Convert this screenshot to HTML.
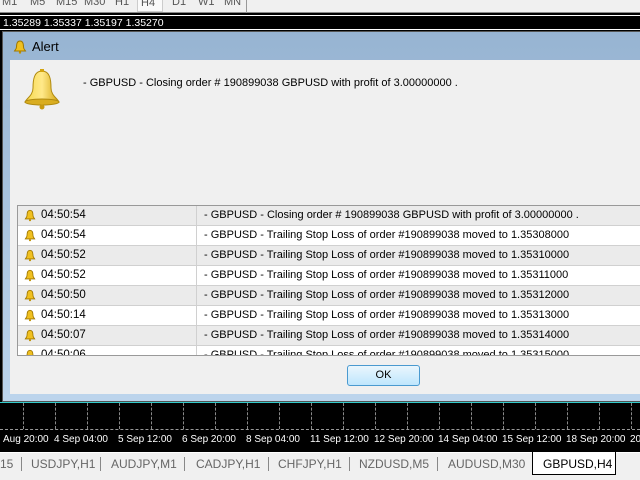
<!DOCTYPE html>
<html><head><style>
*{margin:0;padding:0;box-sizing:border-box}
body{width:640px;height:480px;overflow:hidden;background:#000;font-family:"Liberation Sans",sans-serif;font-size:11px;position:relative}
.abs{position:absolute}
.tb{left:0;top:0;width:640px;height:13px;background:#f0f0f0;border-bottom:1px solid #888}
.tb span{position:absolute;top:-4px;color:#555;font-size:11px}
.dlg{left:2px;top:31px;width:640px;height:371px;background:linear-gradient(#97b4d2,#bcd4ec);border:1px solid #555;border-right:none}
.body{left:7px;top:28px;width:640px;height:334px;background:#f0f0f0}
.list{left:7px;top:145px;width:630px;height:151px;border:1px solid #999;background:#fff;overflow:hidden}
.row{height:20px;border-bottom:1px solid #d0d0d0;position:relative;font-size:11px;line-height:19px}
.row:nth-child(odd){background:#ebebeb}
.row .t{position:absolute;left:23px;font-size:11.5px}
.row .m{position:absolute;left:186px}
.row .d{position:absolute;left:178px;top:0;width:1px;height:20px;background:#d0d0d0}
.bell{position:absolute;left:6px;top:3px}
.ok{left:337px;top:305px;width:73px;height:21px;border:1px solid #4a9ad0;border-radius:3px;background:linear-gradient(#eaf6fd,#bee6fd);text-align:center;line-height:19px;font-size:11px}
.time{left:0;top:434px;color:#fff;font-size:10px;white-space:nowrap}
.tabs{left:0;top:452px;width:640px;height:28px;background:#f0f0f0}
.tabs span{position:absolute;top:5px;color:#666;font-size:12px}
.tabs i{position:absolute;top:5px;width:1px;height:14px;background:#888}
.vd{position:absolute;top:403px;height:26px;border-left:1px dashed #888}
</style></head><body>
<div class="abs tb">
<span style="left:2px">M1</span><span style="left:30px">M5</span><span style="left:56px">M15</span><span style="left:84px">M30</span><span style="left:115px">H1</span>
<span style="left:137px;top:-4px;width:26px;height:16px;background:#fafafa;border:1px solid #ccc;color:#555">&nbsp;H4</span>
<span style="left:172px">D1</span><span style="left:198px">W1</span><span style="left:224px">MN</span>
<div class="abs" style="left:246px;top:0;width:1px;height:13px;background:#999"></div>
</div>
<div class="abs" style="left:0;top:15px;width:640px;height:1px;background:#fff"></div>
<div class="abs" style="left:3px;top:17px;color:#fff;font-size:10.5px">1.35289 1.35337 1.35197 1.35270</div>
<div class="abs" style="left:0;top:29px;width:640px;height:1px;background:#fff"></div>

<div class="abs dlg">
<svg class="abs" style="left:10px;top:8px" width="14" height="14" viewBox="0 0 14 14"><path d="M7 1C4 1 3.5 4 3.5 7C3.5 9 2 10 1.5 11H12.5C12 10 10.5 9 10.5 7C10.5 4 10 1 7 1Z" fill="#f0c020" stroke="#a07800"/><circle cx="7" cy="12.5" r="1.2" fill="#c09000"/></svg>
<div class="abs" style="left:29px;top:7px;font-size:13px;color:#000">Alert</div>
<div class="abs body">
<svg class="abs" style="left:12px;top:8px" width="40" height="42" viewBox="0 0 40 42"><defs><linearGradient id="g" x1="0" x2="1"><stop offset="0" stop-color="#f6d84a"/><stop offset=".5" stop-color="#ffe98a"/><stop offset="1" stop-color="#d4a510"/></linearGradient></defs><path d="M20 3C12 3 11 12 11 20C11 27 5 30 3 34H37C35 30 29 27 29 20C29 12 28 3 20 3Z" fill="url(#g)" stroke="#b08a10"/><ellipse cx="20" cy="34" rx="17" ry="3" fill="#d9ad20" stroke="#b08a10"/><circle cx="20" cy="39" r="2.5" fill="#c89a10"/><rect x="18" y="1" width="4" height="3" fill="#d4a510"/></svg>
<div class="abs" style="left:73px;top:17px;font-size:11px">- GBPUSD - Closing order # 190899038 GBPUSD with profit of 3.00000000 .</div>
<div class="abs list">
<div class="row"><svg class="bell" width="12" height="13" viewBox="0 0 14 14"><path d="M7 1C4 1 3.5 4 3.5 7C3.5 9 2 10 1.5 11H12.5C12 10 10.5 9 10.5 7C10.5 4 10 1 7 1Z" fill="#f0c020" stroke="#a07800"/><circle cx="7" cy="12.5" r="1.2" fill="#c09000"/></svg><span class="t">04:50:54</span><div class="d"></div><span class="m">- GBPUSD - Closing order # 190899038 GBPUSD with profit of 3.00000000 .</span></div>
<div class="row"><svg class="bell" width="12" height="13" viewBox="0 0 14 14"><path d="M7 1C4 1 3.5 4 3.5 7C3.5 9 2 10 1.5 11H12.5C12 10 10.5 9 10.5 7C10.5 4 10 1 7 1Z" fill="#f0c020" stroke="#a07800"/><circle cx="7" cy="12.5" r="1.2" fill="#c09000"/></svg><span class="t">04:50:54</span><div class="d"></div><span class="m">- GBPUSD - Trailing Stop Loss of order #190899038 moved to 1.35308000</span></div>
<div class="row"><svg class="bell" width="12" height="13" viewBox="0 0 14 14"><path d="M7 1C4 1 3.5 4 3.5 7C3.5 9 2 10 1.5 11H12.5C12 10 10.5 9 10.5 7C10.5 4 10 1 7 1Z" fill="#f0c020" stroke="#a07800"/><circle cx="7" cy="12.5" r="1.2" fill="#c09000"/></svg><span class="t">04:50:52</span><div class="d"></div><span class="m">- GBPUSD - Trailing Stop Loss of order #190899038 moved to 1.35310000</span></div>
<div class="row"><svg class="bell" width="12" height="13" viewBox="0 0 14 14"><path d="M7 1C4 1 3.5 4 3.5 7C3.5 9 2 10 1.5 11H12.5C12 10 10.5 9 10.5 7C10.5 4 10 1 7 1Z" fill="#f0c020" stroke="#a07800"/><circle cx="7" cy="12.5" r="1.2" fill="#c09000"/></svg><span class="t">04:50:52</span><div class="d"></div><span class="m">- GBPUSD - Trailing Stop Loss of order #190899038 moved to 1.35311000</span></div>
<div class="row"><svg class="bell" width="12" height="13" viewBox="0 0 14 14"><path d="M7 1C4 1 3.5 4 3.5 7C3.5 9 2 10 1.5 11H12.5C12 10 10.5 9 10.5 7C10.5 4 10 1 7 1Z" fill="#f0c020" stroke="#a07800"/><circle cx="7" cy="12.5" r="1.2" fill="#c09000"/></svg><span class="t">04:50:50</span><div class="d"></div><span class="m">- GBPUSD - Trailing Stop Loss of order #190899038 moved to 1.35312000</span></div>
<div class="row"><svg class="bell" width="12" height="13" viewBox="0 0 14 14"><path d="M7 1C4 1 3.5 4 3.5 7C3.5 9 2 10 1.5 11H12.5C12 10 10.5 9 10.5 7C10.5 4 10 1 7 1Z" fill="#f0c020" stroke="#a07800"/><circle cx="7" cy="12.5" r="1.2" fill="#c09000"/></svg><span class="t">04:50:14</span><div class="d"></div><span class="m">- GBPUSD - Trailing Stop Loss of order #190899038 moved to 1.35313000</span></div>
<div class="row"><svg class="bell" width="12" height="13" viewBox="0 0 14 14"><path d="M7 1C4 1 3.5 4 3.5 7C3.5 9 2 10 1.5 11H12.5C12 10 10.5 9 10.5 7C10.5 4 10 1 7 1Z" fill="#f0c020" stroke="#a07800"/><circle cx="7" cy="12.5" r="1.2" fill="#c09000"/></svg><span class="t">04:50:07</span><div class="d"></div><span class="m">- GBPUSD - Trailing Stop Loss of order #190899038 moved to 1.35314000</span></div>
<div class="row"><svg class="bell" width="12" height="13" viewBox="0 0 14 14"><path d="M7 1C4 1 3.5 4 3.5 7C3.5 9 2 10 1.5 11H12.5C12 10 10.5 9 10.5 7C10.5 4 10 1 7 1Z" fill="#f0c020" stroke="#a07800"/><circle cx="7" cy="12.5" r="1.2" fill="#c09000"/></svg><span class="t">04:50:06</span><div class="d"></div><span class="m">- GBPUSD - Trailing Stop Loss of order #190899038 moved to 1.35315000</span></div>
</div>
<div class="abs ok">OK</div>
</div>
</div>
<div class="abs" style="left:0;top:402px;width:640px;height:1px;background:#3cc"></div>
<div class="vd" style="left:23px"></div><div class="vd" style="left:55px"></div><div class="vd" style="left:87px"></div><div class="vd" style="left:119px"></div><div class="vd" style="left:151px"></div><div class="vd" style="left:183px"></div><div class="vd" style="left:215px"></div><div class="vd" style="left:247px"></div><div class="vd" style="left:279px"></div><div class="vd" style="left:311px"></div><div class="vd" style="left:343px"></div><div class="vd" style="left:375px"></div><div class="vd" style="left:407px"></div><div class="vd" style="left:439px"></div><div class="vd" style="left:471px"></div><div class="vd" style="left:503px"></div><div class="vd" style="left:535px"></div><div class="vd" style="left:567px"></div><div class="vd" style="left:599px"></div><div class="vd" style="left:631px"></div>
<div class="abs" style="left:0;top:429px;width:640px;height:1px;border-top:1px dashed #999"></div>
<div class="abs time">
<span class="abs" style="left:3px">Aug 20:00</span><span class="abs" style="left:54px">4 Sep 04:00</span><span class="abs" style="left:118px">5 Sep 12:00</span><span class="abs" style="left:182px">6 Sep 20:00</span><span class="abs" style="left:246px">8 Sep 04:00</span><span class="abs" style="left:310px">11 Sep 12:00</span><span class="abs" style="left:374px">12 Sep 20:00</span><span class="abs" style="left:438px">14 Sep 04:00</span><span class="abs" style="left:502px">15 Sep 12:00</span><span class="abs" style="left:566px">18 Sep 20:00</span><span class="abs" style="left:630px">20</span>
</div>
<div class="abs tabs">
<div class="abs" style="left:0;top:0;width:640px;height:1px;background:#fff"></div>
<span style="left:0">15</span><i style="left:21px"></i><span style="left:31px">USDJPY,H1</span><i style="left:100px"></i><span style="left:111px">AUDJPY,M1</span><i style="left:184px"></i><span style="left:196px">CADJPY,H1</span><i style="left:268px"></i><span style="left:278px">CHFJPY,H1</span><i style="left:349px"></i><span style="left:359px">NZDUSD,M5</span><i style="left:437px"></i><span style="left:448px">AUDUSD,M30</span>
<span style="left:532px;top:0;width:84px;height:23px;background:#fff;border:1px solid #000;border-top:none;color:#000;padding:5px 0 0 10px">GBPUSD,H4</span>
</div>
</body></html>
